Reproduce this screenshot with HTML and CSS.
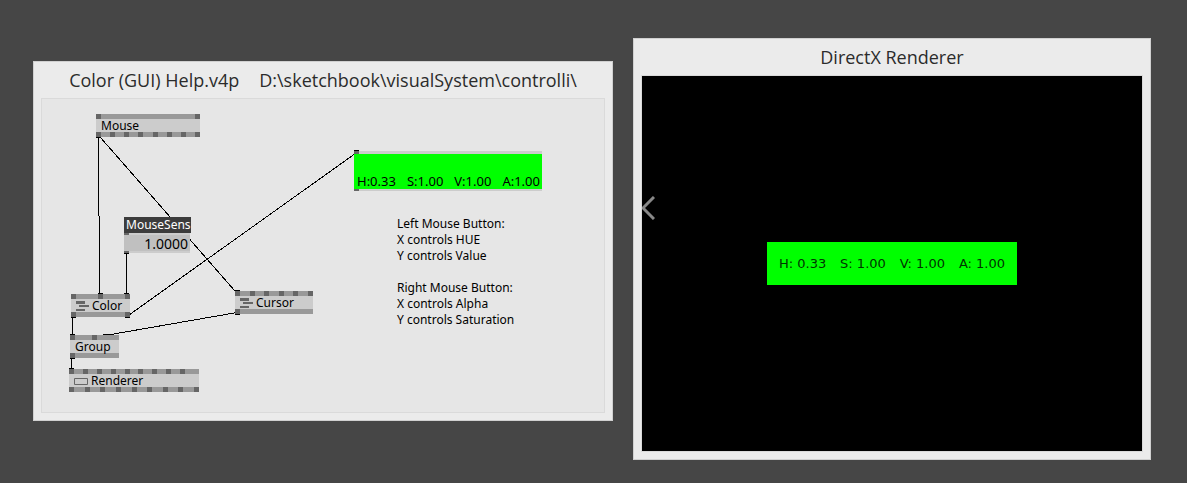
FILE: index.html
```html
<!DOCTYPE html>
<html lang="en">
<head>
<meta charset="utf-8">
<title>Color (GUI) Help</title>
<link rel="stylesheet" href="styles.css">
</head>
<body>
<main class="desktop">
  <section class="window window-patch">
    <h1 class="title"><span>Color (GUI) Help.v4p</span><span>D:\sketchbook\visualSystem\controlli\</span></h1>
    <div class="patch">
      <svg class="wires" width="563" height="313" viewBox="42 99 563 313" aria-hidden="true">
        <path d="M98.5 137V216M99.5 216V294M100 137L235 291M126.5 253V294M129 315L356 153M72.5 317V335M237 312.5L105 335.5M71.5 358V369"/>
        <path d="M96 137.5h5M98 293.5h5M124 253.5h5M124 293.5h5M71 317.5h5M125 317.5h5M70 334.5h5M103 334.5h8M70 358.5h5M69 368.5h5M354 150.5h5M235 290.5h5M235 314.5h5"/>
      </svg>

      <div class="node node-mouse">
        <div class="pins"><i></i><i></i></div>
        <div class="name">Mouse</div>
        <div class="pins"><i></i><i></i><i></i><i></i><i></i><i></i><i></i><i></i></div>
      </div>

      <div class="iobox iobox-sens">
        <label for="sens">MouseSens</label>
        <input id="sens" type="text" value="1.0000">
      </div>

      <div class="node node-color">
        <div class="pins"><i></i><i></i><i></i></div>
        <div class="name"><svg class="glyph" width="13" height="11" viewBox="0 0 13 11" aria-hidden="true"><path d="M0 0h9v3h-9zM3 4h10v2h-10zM0 8h9v2h-9z"/></svg>Color</div>
        <div class="pins"><i></i><i></i></div>
      </div>

      <div class="node node-cursor">
        <div class="pins"><i></i><i></i><i></i><i></i><i></i><i></i></div>
        <div class="name"><svg class="glyph" width="13" height="11" viewBox="0 0 13 11" aria-hidden="true"><path d="M0 0h9v3h-9zM3 4h10v2h-10zM0 8h9v2h-9z"/></svg>Cursor</div>
        <div class="pins"><i></i></div>
      </div>

      <div class="node node-group">
        <div class="pins"><i></i><i></i><i class="free"></i></div>
        <div class="name">Group</div>
        <div class="pins"><i></i></div>
      </div>

      <div class="node node-renderer">
        <div class="pins"><i></i><i></i><i></i><i></i><i></i><i></i><i></i><i></i><i></i><i class="free"></i></div>
        <div class="name"><svg class="screen" width="14" height="7" viewBox="0 0 14 7" aria-hidden="true"><path d="M.5 .5h13v6h-13z"/></svg>Renderer</div>
        <div class="pins"><i></i><i></i><i></i><i></i><i></i><i></i><i></i><i></i><i></i></div>
      </div>

      <div class="swatch">
        <span>H:0.33</span><span>S:1.00</span><span>V:1.00</span><span>A:1.00</span>
      </div>

      <div class="notes">
        <p>Left Mouse Button:<br>X controls HUE<br>Y controls Value</p>
        <p>Right Mouse Button:<br>X controls Alpha<br>Y controls Saturation</p>
      </div>
    </div>
  </section>

  <section class="window window-renderer">
    <h2 class="title">DirectX Renderer</h2>
    <div class="viewport">
      <svg class="chevron" width="13" height="24" viewBox="0 0 13 24" aria-hidden="true"><path d="M12 1L1 12L12 23"/></svg>
      <div class="readout">
        <span>H: 0.33</span><span>S: 1.00</span><span>V: 1.00</span><span>A: 1.00</span>
      </div>
    </div>
  </section>
</main>
</body>
</html>
```

FILE: styles.css
```css
* {
  box-sizing: border-box;
}

body {
  margin: 0;
  background: #464646;
  color: #000;
  font-family: "Noto Sans", "Open Sans", sans-serif;
  font-size: 12px;
  line-height: 16px;
}

.desktop {
  display: flex;
  align-items: flex-start;
  gap: 20px;
  padding: 38px 36px 23px 33px;
}

.window {
  min-width: 0;
  padding: 0 7px 7px;
  border: 1px solid #d0d0d0;
  background: #ebebeb;
}

.window-patch {
  flex: 564 1 0;
  margin-top: 23px;
}

.window-renderer {
  flex: 502 1 0;
}

.title {
  display: flex;
  justify-content: center;
  gap: 20px;
  margin: 0;
  color: #2b2b2b;
  font-family: "Open Sans", "Noto Sans", sans-serif;
  font-size: 18px;
  font-weight: 400;
  line-height: 36px;
  white-space: nowrap;
}

.patch {
  position: relative;
  min-height: 315px;
  border: 1px solid #dadada;
  background: #e6e6e6;
}

.wires {
  position: absolute;
  top: 0;
  left: 0;
  fill: none;
  stroke: #000;
  shape-rendering: crispEdges;
}

.node {
  position: absolute;
  background: #ccc;
}

.node-mouse {
  top: 15px;
  left: 54px;
  width: 104px;
}

.node-color {
  top: 195px;
  left: 29px;
  width: 59px;
}

.node-cursor {
  top: 192px;
  left: 193px;
  width: 78px;
}

.node-group {
  top: 236px;
  left: 28px;
  width: 49px;
}

.node-renderer {
  top: 270px;
  left: 27px;
  width: 130px;
}

.pins {
  display: flex;
  justify-content: space-between;
  height: 5px;
  background: #999;
}

.pins i {
  width: 5px;
  background: #666;
}

.pins .free {
  background: none;
}

.name {
  display: flex;
  align-items: center;
  gap: 3px;
  height: 13px;
  padding: 0 5px;
  line-height: 18px;
}

.glyph {
  fill: #666;
}

.screen {
  fill: none;
  stroke: #666;
}

.node .name {
  padding-top: 1px;
}

.iobox {
  position: absolute;
}

.iobox-sens {
  top: 118px;
  left: 82px;
  width: 67px;
}

.iobox label {
  display: block;
  padding: 0 2px;
  background: #3c3c3c;
  color: #fff;
}

.iobox input {
  display: block;
  width: 66px;
  height: 20px;
  padding: 0 2px;
  border: solid #ccc;
  border-width: 2px 0;
  background: #c0c0c0;
  color: #000;
  font: inherit;
  font-size: 14px;
  text-align: right;
}

.iobox::before,
.iobox::after,
.swatch::before,
.swatch::after {
  position: absolute;
  left: 0;
  width: 5px;
  height: 2px;
  background: #666;
  content: "";
}

.iobox::before {
  top: 16px;
}

.iobox::after {
  bottom: 0;
}

.swatch {
  position: absolute;
  top: 52px;
  left: 312px;
  display: flex;
  align-items: flex-end;
  justify-content: space-between;
  width: 188px;
  height: 40px;
  padding: 0 2px 0 3px;
  border: solid #ccc;
  border-width: 3px 0 2px;
  background: #0f0;
  font-size: 13px;
}

.swatch::before {
  top: -3px;
  height: 3px;
}

.swatch::after {
  bottom: -2px;
}

.notes {
  position: absolute;
  top: 117px;
  left: 355px;
}

.notes p {
  margin: 0 0 16px;
}

.viewport {
  position: relative;
  display: flex;
  align-items: center;
  justify-content: center;
  aspect-ratio: 502 / 377;
  border: 1px solid #dadada;
  background: #000;
}

.chevron {
  position: absolute;
  left: 0;
  bottom: 231px;
  fill: none;
  stroke: #888;
  stroke-width: 3;
}

.readout {
  display: flex;
  justify-content: space-between;
  width: 50%;
  padding: 14px 12px 13px;
  background: #0f0;
  color: #030;
  font-family: "DejaVu Sans", sans-serif;
  font-size: 13px;
  white-space: nowrap;
}
```
